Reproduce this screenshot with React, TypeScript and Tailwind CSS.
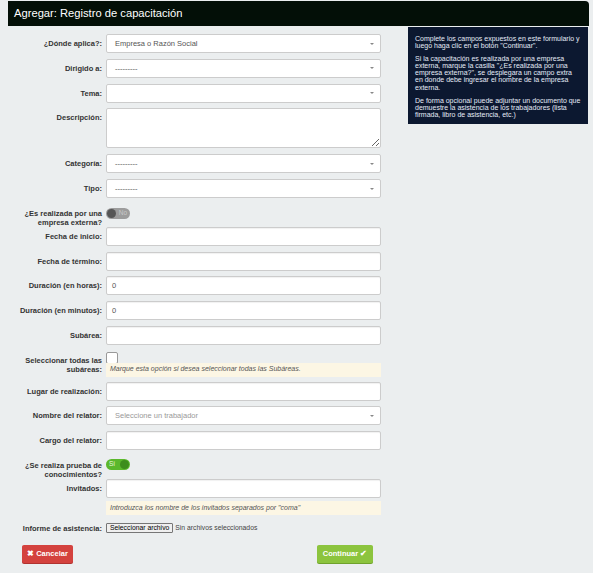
import React from 'react';

const FONT = { fontFamily: '"Liberation Sans", Arial, sans-serif' };

function Row({
  label,
  children,
  className = 'mb-[5.75px]',
}: {
  label: React.ReactNode;
  children: React.ReactNode;
  className?: string;
}) {
  return (
    <div className={`flex ${className}`}>
      <label className="w-[94px] shrink-0 pt-[5px] text-right text-[7.5px] font-bold leading-[9px] text-[#333]">
        {label}
      </label>
      <div className="ml-[4px] w-[275px]">{children}</div>
    </div>
  );
}

function TextBox({ value = '' }: { value?: string }) {
  return (
    <div className="flex h-[19px] items-center rounded-[2px] border border-[#ccc] bg-white pl-[5px] text-[7.5px] text-[#555] shadow-[inset_0_1px_1px_rgba(0,0,0,0.06)]">
      {value}
    </div>
  );
}

function Select({ value, muted }: { value?: string; muted?: boolean }) {
  return (
    <div className="flex h-[19px] items-center justify-between rounded-[2px] border border-[#ccc] bg-white pl-[8px] pr-[6px]">
      <span className={`text-[7.5px] ${muted ? 'text-[#999]' : 'text-[#555]'}`}>{value}</span>
      <span className="h-0 w-0 border-x-[2px] border-t-[2px] border-x-transparent border-t-[#888]" />
    </div>
  );
}

function Toggle({ on }: { on?: boolean }) {
  return on ? (
    <div className="mt-[3px] flex h-[11px] w-[24px] items-center justify-between rounded-full bg-[#5bb82c] pl-[3px] pr-[1px]">
      <span className="text-[6.5px] leading-none text-[#e8f6de]">Sí</span>
      <span className="h-[9px] w-[9px] rounded-full bg-[#3d8d1c]" />
    </div>
  ) : (
    <div className="mt-[4px] flex h-[11px] w-[24px] items-center justify-between rounded-full bg-[#9c9c9c] pl-[1px] pr-[3px]">
      <span className="h-[9px] w-[9px] rounded-full bg-[#555]" />
      <span className="text-[6.5px] leading-none text-[#c8c8c8]">No</span>
    </div>
  );
}

function Help({ children }: { children: React.ReactNode }) {
  return (
    <div className="flex h-[14px] items-center bg-[#fcf6e4] pl-[4px] text-[7px] italic text-[#555]">
      {children}
    </div>
  );
}

export default function App() {
  return (
    <div className="min-h-[573px] bg-[#ebeeef] pl-[8px] pr-[4px] pt-[1px]" style={FONT}>
      <div className="flex h-[25px] items-center rounded-tr-[4px] bg-[#030f07] pl-[6px]">
        <h1 className="text-[11.2px] text-white">Agregar: Registro de capacitación</h1>
      </div>

      <div className="mt-[1px] flex">
        <div className="w-[392px] pt-[7px]">
          <Row label="¿Dónde aplica?:">
            <Select value="Empresa o Razón Social" />
          </Row>
          <Row label="Dirigido a:">
            <Select value="---------" />
          </Row>
          <Row label="Tema:">
            <Select value="" />
          </Row>
          <Row label="Descripción:" className="mb-[6px]">
            <textarea className="block h-[40px] w-full resize-y rounded-[2px] border border-[#ccc] bg-white" />
          </Row>
          <Row label="Categoría:">
            <Select value="---------" />
          </Row>
          <Row label="Tipo:">
            <Select value="---------" />
          </Row>
          <Row
            label={
              <>
                ¿Es realizada por una
                <br />
                empresa externa?
              </>
            }
            className="mb-0"
          >
            <Toggle />
          </Row>
          <Row label="Fecha de inicio:">
            <TextBox />
          </Row>
          <Row label="Fecha de término:">
            <TextBox />
          </Row>
          <Row label="Duración (en horas):">
            <TextBox value="0" />
          </Row>
          <Row label="Duración (en minutos):">
            <TextBox value="0" />
          </Row>
          <Row label="Subárea:">
            <TextBox />
          </Row>
          <Row
            label={
              <>
                Seleccionar todas las
                <br />
                subáreas:
              </>
            }
            className="mb-[5px]"
          >
            <div className="mb-[-1px] mt-[1px] h-[12px] w-[12px] rounded-[2px] border border-[#999] bg-white" />
            <Help>Marque esta opción si desea seleccionar todas las Subáreas.</Help>
          </Row>
          <Row label="Lugar de realización:">
            <TextBox />
          </Row>
          <Row label="Nombre del relator:">
            <Select value="Seleccione un trabajador" muted />
          </Row>
          <Row label="Cargo del relator:">
            <TextBox />
          </Row>
          <Row
            label={
              <>
                ¿Se realiza prueba de
                <br />
                conocimientos?
              </>
            }
            className="mb-0"
          >
            <Toggle on />
          </Row>
          <Row label="Invitados:" className="mb-[8px]">
            <TextBox />
            <div className="mt-[3px]">
              <Help>Introduzca los nombre de los invitados separados por "coma"</Help>
            </div>
          </Row>
          <div className="flex items-center">
            <span className="w-[94px] shrink-0 text-right text-[7.5px] font-bold text-[#333]">
              Informe de asistencia:
            </span>
            <div className="ml-[4px] flex items-center">
              <span className="flex h-[10px] items-center rounded-[1px] border border-[#767676] bg-[#efefef] px-[3px] text-[6.8px] text-black">
                Seleccionar archivo
              </span>
              <span className="ml-[2px] text-[6.8px] text-[#444]">Sin archivos seleccionados</span>
            </div>
          </div>
          <div className="ml-[14px] mt-[11px] flex w-[351px] justify-between">
            <button className="flex h-[18px] w-[51px] items-center justify-center rounded-[2px] bg-[#d4423e] text-[7.5px] font-bold text-white shadow-[0_1px_0_#b03330]">
              ✖ Cancelar
            </button>
            <button className="flex h-[18px] w-[56px] items-center justify-center rounded-[2px] bg-[#8cc43e] text-[7.5px] font-bold text-white shadow-[0_1px_0_#6fa22c]">
              Continuar ✔
            </button>
          </div>
        </div>

        <div className="ml-[8px] w-[180px] self-start bg-[#0c1830] px-[7px] pb-[5.5px] pt-[7.5px] text-[7px] leading-[7.3px] text-[#e6ecf8]">
          <p>
            Complete los campos expuestos en este formulario y
            <br />
            luego haga clic en el botón "Continuar".
          </p>
          <p className="mt-[5.5px]">
            Si la capacitación es realizada por una empresa
            <br />
            externa, marque la casilla "¿Es realizada por una
            <br />
            empresa externa?", se desplegara un campo extra
            <br />
            en donde debe ingresar el nombre de la empresa
            <br />
            externa.
          </p>
          <p className="mt-[5.5px]">
            De forma opcional puede adjuntar un documento que
            <br />
            demuestre la asistencia de los trabajadores (lista
            <br />
            firmada, libro de asistencia, etc.)
          </p>
        </div>
      </div>
    </div>
  );
}
